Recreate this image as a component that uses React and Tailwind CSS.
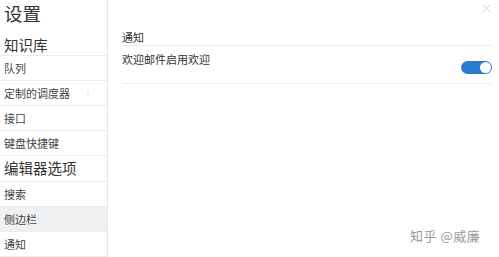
import React from 'react'

const font = { fontFamily: '"Noto Sans CJK SC", "Noto Sans", sans-serif' }

const items = [
  { label: '知识库', type: 'header' },
  { label: '队列' },
  { label: '定制的调度器', dots: true },
  { label: '接口' },
  { label: '键盘快捷键' },
  { label: '编辑器选项', type: 'header' },
  { label: '搜索' },
  { label: '侧边栏', active: true },
  { label: '通知' },
]

const App = () => {
  return (
    <div className="flex w-[499px] h-[257px] bg-white overflow-hidden relative" style={font}>
      {/* sidebar */}
      <div className="w-[108px] shrink-0 border-r border-[#e6e6e6] flex flex-col">
        <div className="h-[27px] pl-[4px] flex items-center text-[18.5px] leading-none text-[#333]">设置</div>
        {items.map((it, i) =>
          it.type === 'header' ? (
            <div
              key={it.label}
              className={`${i === 0 ? 'h-[29px] pb-[3px] items-end' : 'h-[26px] items-center'} pl-[4px] flex text-[14.5px] leading-none text-[#333] border-b border-[#ececec]`}
            >
              {it.label}
            </div>
          ) : (
            <div
              key={it.label}
              className={`h-[25px] pl-[4px] pr-[6px] flex items-center justify-between text-[11px] leading-none text-[#444] border-b border-[#ececec] ${it.active ? 'bg-[#eff0f2]' : ''}`}
            >
              <span>{it.label}</span>
              {it.dots && <span className="text-[7px] text-[#bbb] mr-[12px]">⁝</span>}
            </div>
          )
        )}
      </div>

      {/* content */}
      <div className="flex-1 pl-[14px] pr-[7px] pt-[30px]">
        <div className="h-[16px] flex items-center text-[11px] text-[#333] border-b border-[#ececec]">通知</div>
        <div className="h-[38px] flex justify-between border-b border-[#ececec]">
          <span className="text-[11px] text-[#333] mt-[8px] leading-none">欢迎邮件启用欢迎</span>
          <div className="w-[31px] h-[13px] mt-[15px] rounded-full bg-[#2b7bd0] flex items-center justify-end pr-[1px]">
            <div className="w-[11px] h-[11px] rounded-full bg-white" />
          </div>
        </div>
      </div>

      {/* close */}
      <svg className="absolute top-[4px] right-[8px]" width="9" height="9" viewBox="0 0 9 9">
        <path d="M0.5 0.5L8.5 8.5M8.5 0.5L0.5 8.5" stroke="#cfcfcf" strokeWidth="1" />
      </svg>

      {/* watermark */}
      <div className="absolute left-[410px] top-[226px] text-[13px] text-[#9a9a9a] tracking-[0.5px] [text-shadow:0_0_2px_#fff]">知乎 @威廉</div>
    </div>
  )
}

export default App
